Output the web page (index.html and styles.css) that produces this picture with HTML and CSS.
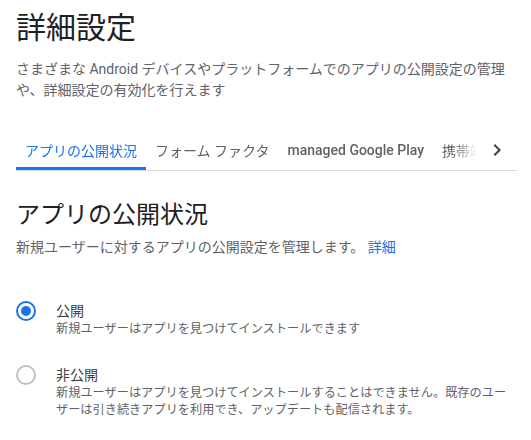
FILE: index.html
```html
<!DOCTYPE html>
<html lang="ja">
<head>
<meta charset="utf-8">
<link rel="stylesheet" href="styles.css">
</head>
<body>
<main class="page">
  <h1 class="title">詳細設定</h1>
  <p class="subtitle">さまざまな Android デバイスやプラットフォームでのアプリの公開設定の管理や、詳細設定の有効化を行えます</p>

  <nav class="tabs">
    <div class="tab-list">
      <span class="tab active">アプリの公開状況</span>
      <span class="tab">フォーム ファクタ</span>
      <span class="tab latin">managed Google Play</span>
      <span class="tab">携帯端末</span>
    </div>
    <button class="tab-next" aria-label="次へ">
      <svg width="24" height="24" viewBox="0 0 24 24"><path d="M10 6 8.59 7.41 13.17 12l-4.58 4.59L10 18l6-6z" fill="#3c4043"/></svg>
    </button>
  </nav>

  <h2 class="section-title">アプリの公開状況</h2>
  <p class="section-desc">新規ユーザーに対するアプリの公開設定を管理します。 <a class="link">詳細</a></p>

  <div class="options">
    <label class="option">
      <span class="radio checked"></span>
      <span class="option-text">
        <span class="option-label">公開</span>
        <span class="option-desc">新規ユーザーはアプリを見つけてインストールできます</span>
      </span>
    </label>
    <label class="option">
      <span class="radio"></span>
      <span class="option-text">
        <span class="option-label">非公開</span>
        <span class="option-desc">新規ユーザーはアプリを見つけてインストールすることはできません。既存のユーザーは引き続きアプリを利用でき、アップデートも配信されます。</span>
      </span>
    </label>
  </div>
</main>
</body>
</html>
```

FILE: styles.css
```css
* { box-sizing: border-box; }
html, body { margin: 0; padding: 0; background: #fff; }
body {
  font-family: Roboto, "Noto Sans CJK JP", sans-serif;
  color: #5f6368;
}
.page {
  padding: 8px 14px 0 16px;
}
.title {
  margin: 0;
  font-size: 30px;
  font-weight: 400;
  line-height: 40px;
  color: #202124;
}
.subtitle {
  margin: 11px 0 0;
  font-size: 14px;
  line-height: 21px;
  color: #5f6368;
}
.tabs {
  margin-top: 28px;
  display: flex;
  align-items: center;
  border-bottom: 1px solid #dadce0;
  height: 42px;
}
.tab-list {
  display: flex;
  flex: 1;
  overflow: hidden;
  height: 100%;
  -webkit-mask-image: linear-gradient(to right, #000 calc(100% - 24px), transparent);
  mask-image: linear-gradient(to right, #000 calc(100% - 24px), transparent);
}
.tab {
  flex: none;
  display: flex;
  align-items: center;
  padding: 3px 9px 0;
  font-size: 14px;
  color: #5f6368;
  white-space: nowrap;
  height: 100%;
  border-bottom: 3px solid transparent;
}
.tab.latin { font-weight: 500; }
.tab.active {
  color: #1a73e8;
  border-bottom-color: #1a73e8;
  border-radius: 3px 3px 0 0;
}
.tab-next {
  flex: none;
  width: 40px;
  height: 100%;
  border: 0;
  background: none;
  padding: 0;
  display: flex;
  align-items: center;
  justify-content: center;
}
.section-title {
  margin: 28px 0 0;
  font-size: 24px;
  font-weight: 400;
  line-height: 32px;
  color: #202124;
}
.section-desc {
  margin: 6px 0 0;
  font-size: 14px;
  line-height: 20px;
}
.link { color: #1a73e8; }
.options {
  margin-top: 44px;
  display: flex;
  flex-direction: column;
  gap: 27px;
}
.option {
  display: flex;
  gap: 20px;
}
.radio {
  flex: none;
  width: 20px;
  height: 20px;
  border: 2px solid #bdc1c6;
  border-radius: 50%;
  position: relative;
}
.radio.checked { border-color: #1a73e8; }
.radio.checked::after {
  content: "";
  position: absolute;
  inset: 3px;
  border-radius: 50%;
  background: #1a73e8;
}
.option-text {
  display: flex;
  flex-direction: column;
  max-width: 456px;
}
.option-label {
  font-size: 14px;
  line-height: 20px;
  color: #3c4043;
}
.option-desc {
  font-size: 12.2px;
  line-height: 17px;
  color: #5f6368;
}
```
